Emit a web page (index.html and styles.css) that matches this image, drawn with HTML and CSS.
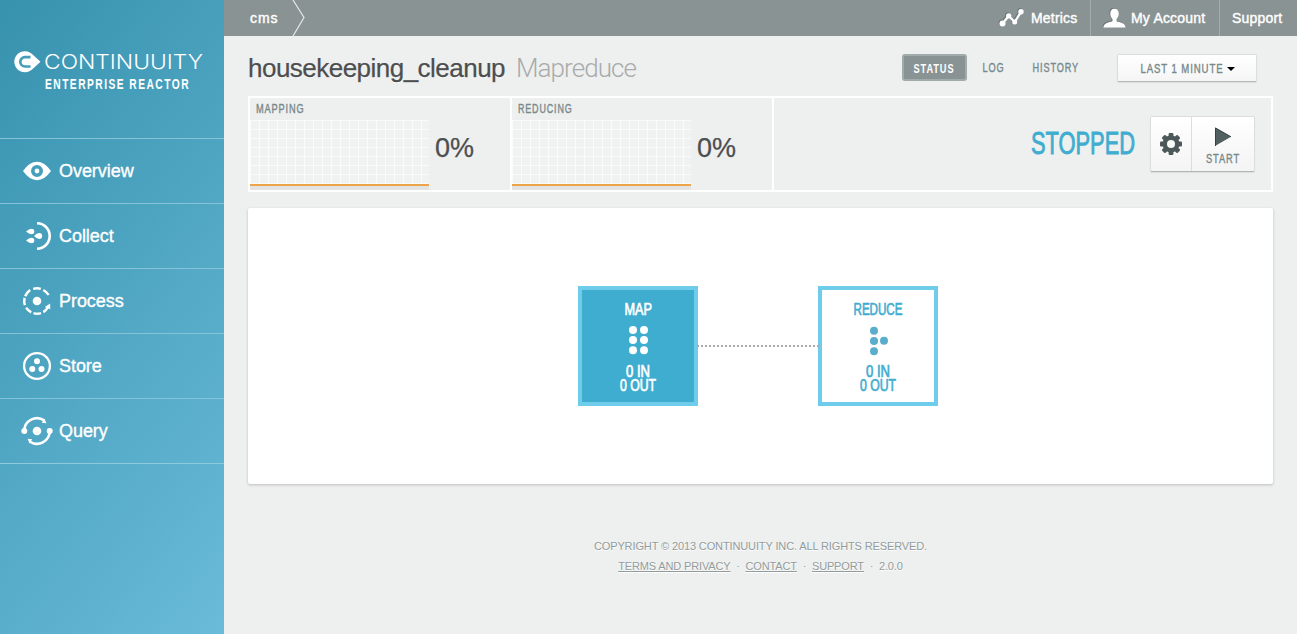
FILE: index.html
```html
<!DOCTYPE html>
<html lang="en">
<head>
<meta charset="utf-8">
<title>housekeeping_cleanup</title>
<link rel="stylesheet" href="styles.css">
</head>
<body>
<div class="app">
  <aside class="sidebar">
    <div class="brand">
      <svg class="brand-mark" width="27" height="22" viewBox="0 0 27 22"><path d="M11 .3C5 .3.300 5 .3 10.800S5 21.300 11 21.300c3.500 0 6.500-2 9-4.500l6.500-6L20 4.800C17.500 2.300 14.500.3 11 .3z" fill="#fff"/><path d="M16.500 6.100h-5.500a4.700 4.700 0 0 0 0 9.400h5.500" fill="none" stroke="#459db9" stroke-width="2.700"/><path d="M10 10.800h8" stroke="#fff" stroke-width="3"/></svg>
      <div class="brand-text">
        <svg class="brand-name" width="160" height="26" viewBox="0 0 160 26"><text x="-1" y="21" textLength="159" lengthAdjust="spacingAndGlyphs">CONTINUUITY</text></svg>
        <svg class="narrow brand-sub" width="145" height="16"><text x="0" y="13" textLength="145" lengthAdjust="spacingAndGlyphs">ENTERPRISE REACTOR</text></svg>
      </div>
    </div>
    <nav class="nav">
      <a class="nav-item"><svg width="32" height="32" viewBox="0 0 32 32"><path d="M2 16Q8.500 6.800 16 6.800T30 16Q23.500 25.200 16 25.200T2 16z" fill="#fff"/><circle cx="16" cy="16" r="4.200" fill="none" stroke="#459fbc" stroke-width="3.600"/></svg><span>Overview</span></a>
      <a class="nav-item"><svg width="32" height="32" viewBox="0 0 32 32"><path d="M16 3.300a12.700 12.700 0 0 1 0 25.400" fill="none" stroke="#fff" stroke-width="2.600"/><g fill="#fff"><path d="M5 11.500Q8 9 10.500 8.700a2.800 2.800 0 0 1 0 5.600Q8 14 5 11.500zM5 20.500Q8 18 10.500 17.700a2.800 2.800 0 0 1 0 5.600Q8 23 5 20.500zM13 16Q15.500 13.300 18.300 13.100a2.900 2.900 0 0 1 0 5.800Q15.500 18.700 13 16z"/></g></svg><span>Collect</span></a>
      <a class="nav-item"><svg width="32" height="32" viewBox="0 0 32 32"><circle cx="16" cy="16" r="4.300" fill="#fff"/><path d="M12.200 3.900a12.700 12.700 0 0 1 7.600 0M22.300 5a12.700 12.700 0 0 1 5.300 5M4.200 11.200a12.700 12.700 0 0 1 5-6.200M3.900 20.200a12.700 12.700 0 0 1-.3-7.300M10.300 27.300a12.700 12.700 0 0 1-5.200-4.700M20 28.100a12.700 12.700 0 0 1-7.500 0M22.300 27.100a12.700 12.700 0 0 0 4.500-4.600" fill="none" stroke="#fff" stroke-width="2.500"/><path d="M29.200 18.500v5.800l-5.400-2.400z" fill="#fff"/></svg><span>Process</span></a>
      <a class="nav-item"><svg width="32" height="32" viewBox="0 0 32 32"><circle cx="16" cy="16" r="12.900" fill="none" stroke="#fff" stroke-width="2.300"/><g fill="#fff"><circle cx="16" cy="11.300" r="3"/><circle cx="11.300" cy="18.900" r="3"/><circle cx="20.500" cy="18.900" r="3"/></g></svg><span>Store</span></a>
      <a class="nav-item"><svg width="32" height="32" viewBox="0 0 32 32"><path d="M3.300 16a12.700 12.700 0 0 1 20-10.400M28.700 16A12.700 12.700 0 0 1 8.700 26.400" fill="none" stroke="#fff" stroke-width="2.500"/><g fill="#fff"><circle cx="16" cy="16" r="4.300"/><circle cx="3.300" cy="16" r="3"/><circle cx="28.700" cy="16" r="3"/><path d="M20.800 7.800l2.600-4.300 2 4.700zM11.200 24.200l-2.600 4.300-2-4.700z"/></g></svg><span>Query</span></a>
    </nav>
  </aside>
  <div class="main">
    <header class="topbar">
      <a class="crumb"><span>cms</span></a>
      <svg class="crumb-arrow" width="14" height="36" viewBox="0 0 14 36"><path d="M1 0l11 17.500L1 36" fill="none" stroke="#e4e8e8" stroke-width="1.200"/></svg>
      <div class="topnav">
        <a class="top-link metrics"><svg width="26" height="20" viewBox="0 0 26 20"><path d="M3.500 15.500L9.700 8l6 6L22 3.800" fill="none" stroke="#fff" stroke-width="2.300"/><g fill="#fff"><circle cx="3.500" cy="15.500" r="3"/><circle cx="9.700" cy="7.800" r="2.600"/><circle cx="15.700" cy="14" r="2.500"/><circle cx="22" cy="3.800" r="2.700"/></g></svg><span>Metrics</span></a>
        <a class="top-link account"><svg width="23" height="20" viewBox="0 0 23 20"><path d="M11.500.8c3 0 4.300 2 4.200 5-.1 2.500-1 4-2.200 5.200v2.200c3 1.300 9 1.500 9 6.300H.5c0-4.800 6-5 9-6.300V11C8.300 9.800 7.400 8.300 7.300 5.800c-.1-3 1.200-5 4.200-5z" fill="#fff"/></svg><span>My Account</span></a>
        <a class="top-link support"><span>Support</span></a>
      </div>
    </header>
    <section class="titlebar">
      <h1><span class="flow-name">housekeeping_cleanup</span><span class="flow-type">Mapreduce</span></h1>
      <div class="tabs">
        <a class="tab active"><svg class="narrow" width="41" height="16"><text x="-.5" y="13" textLength="41" lengthAdjust="spacingAndGlyphs">STATUS</text></svg></a>
        <a class="tab log"><svg class="narrow" width="22" height="16"><text x="-.5" y="13" textLength="22" lengthAdjust="spacingAndGlyphs">LOG</text></svg></a>
        <a class="tab history"><svg class="narrow" width="46" height="16"><text x="-.5" y="13" textLength="46.500" lengthAdjust="spacingAndGlyphs">HISTORY</text></svg></a>
        <a class="range"><svg class="narrow" width="83" height="16"><text x="-.5" y="13" textLength="83" lengthAdjust="spacingAndGlyphs">LAST 1 MINUTE</text></svg><i class="caret"></i></a>
      </div>
    </section>
    <section class="panel">
      <div class="metric"><div class="metric-name"><svg class="narrow" width="49" height="16"><text x="0" y="13" textLength="48.500" lengthAdjust="spacingAndGlyphs">MAPPING</text></svg></div><div class="metric-body"><div class="chart"></div><div class="pct">0%</div></div></div>
      <div class="metric"><div class="metric-name"><svg class="narrow" width="55" height="16"><text x="0" y="13" textLength="54.500" lengthAdjust="spacingAndGlyphs">REDUCING</text></svg></div><div class="metric-body"><div class="chart"></div><div class="pct">0%</div></div></div>
      <div class="control">
        <svg class="narrow state" width="105" height="38"><text x="0" y="29" textLength="104" lengthAdjust="spacingAndGlyphs">STOPPED</text></svg>
        <div class="buttons">
          <a class="gear"><svg width="24" height="24" viewBox="-12 -12 24 24"><g fill="#4c5859"><g id="teeth"><rect x="-2.400" y="-11" width="4.800" height="22" rx="1"/><rect x="-11" y="-2.400" width="22" height="4.800" rx="1"/></g><use href="#teeth" transform="rotate(45)"/><circle r="8.500"/></g><circle r="4" fill="#fafafa"/></svg></a>
          <a class="start"><svg width="18" height="20" viewBox="0 0 18 20"><path d="M1 .5l16 9.300L1 19z" fill="#536061"/><path d="M1.500 19V1L17 9.800" fill="none" stroke="#354142"/></svg><svg class="narrow" width="33" height="16"><text x="-1" y="13" textLength="34" lengthAdjust="spacingAndGlyphs">START</text></svg></a>
        </div>
      </div>
    </section>
    <section class="card">
      <div class="node map">
        <svg class="narrow" width="27" height="18"><text x="-.5" y="15" textLength="27.500" lengthAdjust="spacingAndGlyphs">MAP</text></svg>
        <svg class="node-icon" width="20" height="30" viewBox="0 0 20 30"><g fill="#fff"><circle cx="5" cy="4" r="4"/><circle cx="16" cy="4" r="4"/><circle cx="5" cy="14" r="4"/><circle cx="16" cy="14" r="4"/><circle cx="5" cy="24.300" r="4"/><circle cx="16" cy="24.300" r="4"/></g></svg>
        <svg class="narrow" width="36" height="32"><text x="6" y="15" textLength="24" lengthAdjust="spacingAndGlyphs">0 IN</text><text x="0" y="29" textLength="36" lengthAdjust="spacingAndGlyphs">0 OUT</text></svg>
      </div>
      <div class="link"></div>
      <div class="node reduce">
        <svg class="narrow" width="49" height="18"><text x="-.5" y="15" textLength="49" lengthAdjust="spacingAndGlyphs">REDUCE</text></svg>
        <svg class="node-icon" width="20" height="30" viewBox="0 0 20 30"><g fill="#5aadcd"><circle cx="6" cy="4.700" r="4"/><circle cx="6" cy="15" r="4"/><circle cx="6" cy="25.300" r="4"/><circle cx="16" cy="14.700" r="4"/></g></svg>
        <svg class="narrow" width="36" height="32"><text x="6" y="15" textLength="24" lengthAdjust="spacingAndGlyphs">0 IN</text><text x="0" y="29" textLength="36" lengthAdjust="spacingAndGlyphs">0 OUT</text></svg>
      </div>
    </section>
    <footer class="footer">
      <div>COPYRIGHT © 2013 CONTINUUITY INC. ALL RIGHTS RESERVED.</div>
      <div class="legal"><a>TERMS AND PRIVACY</a><span>·</span><a>CONTACT</a><span>·</span><a>SUPPORT</a><span>·</span>2.0.0</div>
    </footer>
  </div>
</div>
</body>
</html>
```
FILE: styles.css
```css
* { box-sizing: border-box; }
body { margin: 0; background: #eef0ef; font-family: "Liberation Sans", Arial, sans-serif; }
.app { display: flex; width: 1297px; height: 634px; overflow: hidden; }
.sidebar { width: 224px; height: 634px; background: linear-gradient(128deg, #3792ae 0%, #69bbd9 100%); color: #fff; }
.narrow { display: block; flex: none; overflow: visible; fill: currentColor; font-size: 12.500px; letter-spacing: 1.200px; }
.brand { height: 138px; padding: 51px 0 0 14px; display: flex; align-items: flex-start; gap: 4px; }
.brand-mark { display: block; flex: none; }
.brand-text { flex: none; margin-top: -3px; }
.brand-name { display: block; overflow: visible; }
.brand-name text { font: 300 20.500px Inter, "Liberation Sans", sans-serif; fill: #fff; }
.brand-sub { font-size: 14px; font-weight: bold; letter-spacing: 2px; margin-top: 2px; }
.nav-item { display: flex; align-items: center; height: 65px; padding-left: 21px; gap: 6px; border-top: 1px solid #86c2d8; font-size: 18px; letter-spacing: -.05px; -webkit-text-stroke: .35px #fff; }
.nav-item:last-child { height: 66px; border-bottom: 1px solid #8dc9df; }
.nav-item svg { display: block; }
.main { width: 1073px; }
.topbar { height: 36px; background: #8a9393; color: #fff; display: flex; font-size: 14px; line-height: 36px; }
.crumb { width: 68px; padding-left: 26px; letter-spacing: .9px; -webkit-text-stroke: .4px #fff; }
.topnav { margin-left: auto; display: flex; letter-spacing: .2px; -webkit-text-stroke: .4px #fff; }
.top-link { display: flex; align-items: center; white-space: nowrap; }
.top-link svg { filter: drop-shadow(-1px -1px 0 #6f7979); }
.metrics { width: 91px; gap: 6px; }
.account { width: 129px; border-left: 1px solid #a3abab; padding-left: 12px; gap: 5px; }
.support { width: 78px; border-left: 1px solid #a3abab; padding-left: 12px; }
.titlebar { height: 60px; padding: 0 40px 0 24px; display: flex; justify-content: space-between; }
h1 { margin: 16px 0 0; font-size: 26px; line-height: 32px; font-weight: normal; color: #4c4e4f; white-space: nowrap; }
.flow-name { letter-spacing: -.52px; -webkit-text-stroke: .25px #4c4e4f; text-shadow: 0 1px #fff; }
.flow-type { font-family: Roboto, sans-serif; font-weight: 300; color: #a9abab; margin-left: 11px; letter-spacing: -.95px; }
.tabs { display: flex; align-items: flex-start; padding-top: 18px; color: #78898c; }
.tab { padding-top: 5px; }
.active { width: 65px; height: 27px; padding: 4px 0 0 10px; border: 2px solid #a2abac; border-radius: 3px; background: #8a9393; color: #fff; font-weight: bold; }
.log { margin-left: 16px; width: 50px; }
.history { width: 84px; }
.range { width: 140px; height: 28px; border: 1px solid #ddd; border-bottom-color: #b3b8b8; border-radius: 2px; background: linear-gradient(#fff, #f5f5f5); display: flex; align-items: flex-start; gap: 3px; padding: 5px 0 0 23px; box-shadow: 0 1px 1px #ddd; }
.caret { border: 4px solid transparent; border-top-color: #000; border-bottom: 0; margin-top: 7px; }
.panel { margin-left: 24px; width: 1025px; height: 96px; border: 2px solid #fff; display: flex; }
.metric { width: 262px; border-right: 2px solid #fff; }
.metric-name { height: 22px; padding: 2px 0 0 6px; color: #78898c; }
.metric-name .narrow, .range .narrow, .start .narrow, .log .narrow, .history .narrow { stroke: currentColor; stroke-width: .4px; }
.metric-body { display: flex; }
.chart { width: 179px; height: 70px; background: linear-gradient(#eda54c, #eda54c) 0 64px / 100% 2px no-repeat, linear-gradient(#e3e3e3, #e3e3e3) 0 66px / 100% 4px no-repeat, linear-gradient(#f9fafa 1px, transparent 1px) 0 0 / 9px 9px, linear-gradient(90deg, #f9fafa 1px, #f0f2f1 1px) 0 0 / 9px 9px; }
.pct { font-size: 27px; line-height: 56px; padding-left: 6px; color: #4c4e4f; -webkit-text-stroke: .25px #4c4e4f; }
.control { flex: 1; display: flex; justify-content: flex-end; padding: 18px 16px 0 0; }
.state { font-size: 31px; letter-spacing: 0; margin: 9px 14px 0 0; color: #3fadd0; stroke: #3fadd0; stroke-width: .9px; }
.buttons { display: flex; width: 105px; height: 56px; border: 1px solid #ddd; border-bottom-color: #b0b5b5; border-radius: 2px; background: linear-gradient(#fff, #f4f4f4); box-shadow: 0 1px 1px #ddd; }
.gear { width: 41px; border-right: 1px solid #ddd; display: flex; align-items: center; justify-content: center; }
.start { flex: 1; display: flex; flex-direction: column; align-items: center; padding-top: 10px; color: #78898c; }
.start .narrow { margin-top: 3px; }
.card { margin: 16px 0 0 24px; width: 1025px; height: 276px; background: #fff; border-radius: 2px; box-shadow: 0 1px 3px #bbb; display: flex; padding: 78px 0 0 330px; }
.node { flex: none; width: 120px; height: 120px; border: 4px solid #70cceb; display: flex; flex-direction: column; align-items: center; padding-top: 10px; color: #3fadd0; }
.node .narrow { font-size: 16.500px; letter-spacing: 0; stroke: currentColor; stroke-width: .7px; }
.node-icon { display: block; flex: none; margin: 8px 0 6px; }
.map { background: #3fadd0; color: #fff; }
.link { flex: none; position: relative; width: 122px; height: 2px; margin: 59px -1px 0; background: repeating-linear-gradient(90deg, #aaa 0 2px, transparent 2px 4px); }
.footer { width: 1025px; margin: 52px 0 0 24px; text-align: center; font-size: 11px; line-height: 20px; letter-spacing: -.12px; color: #929b9b; text-shadow: 0 1px #fff; }
.legal { letter-spacing: -.15px; }
.legal a { text-decoration: underline; }
.legal span { margin: 0 5.800px; }
```
